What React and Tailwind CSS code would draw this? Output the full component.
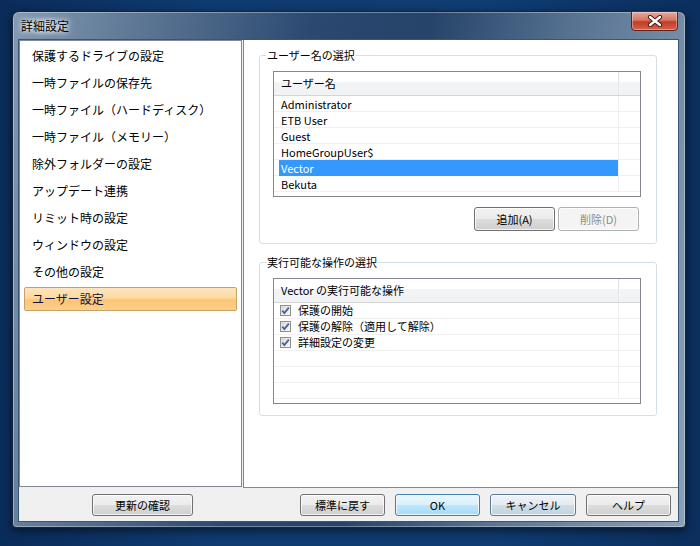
import React from 'react';

const navItems = [
  '保護するドライブの設定',
  '一時ファイルの保存先',
  '一時ファイル（ハードディスク）',
  '一時ファイル（メモリー）',
  '除外フォルダーの設定',
  'アップデート連携',
  'リミット時の設定',
  'ウィンドウの設定',
  'その他の設定',
  'ユーザー設定',
];

const users = ['Administrator', 'ETB User', 'Guest', 'HomeGroupUser$', 'Vector', 'Bekuta'];
const actions = ['保護の開始', '保護の解除（適用して解除）', '詳細設定の変更', '', '', ''];

const Btn = ({ children, kind = 'normal', w }) => {
  const styles = {
    normal:
      'border-[#707070] text-black bg-[linear-gradient(to_bottom,#f2f2f2_0%,#ebebeb_50%,#dddddd_50%,#cfcfcf_100%)]',
    primary:
      'border-[#3c7fb1] text-black bg-[linear-gradient(to_bottom,#eaf6fd_0%,#d9f0fc_50%,#bee6fd_50%,#a7d9f5_100%)]',
    hover:
      'border-[#5b7a94] text-black bg-[linear-gradient(to_bottom,#eef3f7_0%,#e3ebf1_50%,#cfdde7_50%,#c2d4e0_100%)]',
    disabled: 'border-[#adb2b5] text-[#8a8a8a] bg-[#f4f4f4]',
  };
  return (
    <button
      className={`${w} h-full rounded-[3px] border text-[11px] leading-none shadow-[inset_0_0_0_1px_rgba(255,255,255,0.75)] ${styles[kind]}`}
    >
      {children}
    </button>
  );
};

const Check = () => (
  <span className="flex h-[11px] w-[11px] items-center justify-center border border-[#8e8f8f] bg-[linear-gradient(135deg,#d8d8d8,#fafafa)]">
    <svg width="9" height="9" viewBox="0 0 9 9">
      <path d="M1.3 4.6 L3.4 7 L7.8 1.6" fill="none" stroke="#4a5fa0" strokeWidth="1.8" />
    </svg>
  </span>
);

const ListHeader = ({ title }) => (
  <div className="flex h-[24px] border-b border-[#d5d5d5] bg-[linear-gradient(to_bottom,#ffffff_0%,#ffffff_45%,#f3f4f6_45%,#f1f2f4_100%)]">
    <div className="flex w-[344px] items-center pl-[7px] text-[11px] text-black">{title}</div>
    <div className="w-[2px] border-l border-[#e3e5e8] bg-[#f7f7f7]" />
    <div className="flex-1" />
  </div>
);

const GroupBox = ({ legend, className, children }) => (
  <div className={`relative ml-[15px] w-[398px] rounded-[3px] border border-[#d5dfe5] pl-[13px] pt-[15px] ${className}`}>
    <span className="absolute left-[6px] top-[-8px] bg-white px-[1px] text-[11px] leading-[14px] text-black">
      {legend}
    </span>
    {children}
  </div>
);

export default function App() {
  return (
    <div className="h-[546px] w-[700px] overflow-hidden bg-[linear-gradient(to_right,#0a2c5a,#0f3b70_30%,#0f3c72_70%,#0b2f5e)] pl-[12px] pt-[11px] font-['Noto_Sans_CJK_JP',sans-serif]">
      <div className="relative flex h-[517px] w-[674px] flex-col rounded-b-[4px] rounded-t-[7px] border border-[#15253a] bg-[linear-gradient(100deg,#8299b1_0%,#5a7492_18%,#2a4870_40%,#264469_55%,#5a7594_75%,#8ba1b8_100%)] shadow-[0_3px_10px_rgba(0,0,0,0.55),inset_0_0_0_1px_rgba(255,255,255,0.35)]">
        {/* title bar */}
        <div className="flex h-[28px] items-center pl-[7px]">
          <span className="rounded-[6px] bg-[radial-gradient(ellipse_at_center,rgba(255,255,255,0.45),rgba(255,255,255,0)_75%)] px-[1px] text-[12px] text-black [text-shadow:0_0_5px_rgba(255,255,255,1),0_0_9px_rgba(255,255,255,0.85)]">
            詳細設定
          </span>
        </div>
        <div className="absolute right-[7px] top-[-1px] flex h-[20px] w-[47px] items-center justify-center rounded-b-[4px] border border-[#5a231d] bg-[linear-gradient(to_bottom,#e7a99e_0%,#d47764_45%,#c23b25_55%,#d5644b_100%)] shadow-[inset_0_0_0_1px_rgba(255,255,255,0.35)]">
          <svg width="16" height="12" viewBox="0 0 16 12">
            <path d="M3 2 L13 10 M13 2 L3 10" stroke="#3b1510" strokeWidth="4.2" strokeLinecap="round" />
            <path d="M3 2 L13 10 M13 2 L3 10" stroke="#ffffff" strokeWidth="2.4" strokeLinecap="round" />
          </svg>
        </div>

        {/* client */}
        <div className="mb-[6px] ml-[6px] mr-[7px] flex flex-1 flex-col bg-[#f0f0f0] shadow-[0_0_0_1px_#3a5677]">
          <div className="flex h-[448px]">
            {/* left nav */}
            <div className="flex h-[447px] w-[223px] flex-col gap-[3px] border border-[#828790] bg-white px-[4px] pt-[3px]">
              {navItems.map((t, i) => {
                const sel = i === navItems.length - 1;
                return (
                  <div
                    key={t}
                    className={
                      sel
                        ? 'flex h-[24px] items-center rounded-[2px] border border-[#c8a068] bg-[linear-gradient(to_bottom,#fde5bf_0%,#fdd9a0_45%,#fbc574_55%,#fcd08c_100%)] pl-[7px] text-[12px] text-[#101040]'
                        : 'flex h-[24px] items-center border border-transparent pl-[7px] text-[12px] text-black'
                    }
                  >
                    {t}
                  </div>
                );
              })}
            </div>
            <div className="w-[1px]" />
            {/* right content */}
            <div className="flex-1 border-b border-l border-[#828790] bg-white pt-[15px]">
              <GroupBox legend="ユーザー名の選択" className="h-[189px]">
                <div className="h-[126px] w-[368px] border border-[#828790] bg-white">
                  <ListHeader title="ユーザー名" />
                  {users.map((u) => {
                    const sel = u === 'Vector';
                    return (
                      <div key={u} className="flex h-[16px] border-b border-[#f0f0f0]">
                        <div className="w-[344px] pl-[5px]">
                          <div
                            className={
                              sel
                                ? 'h-[16px] bg-[#3399ff] pl-[2px] text-[11px] leading-[16px] text-white'
                                : 'h-[16px] pl-[2px] text-[11px] leading-[16px] text-black'
                            }
                          >
                            {u}
                          </div>
                        </div>
                        <div className="flex-1 border-l border-[#f0f0f0]" />
                      </div>
                    );
                  })}
                </div>
                <div className="mt-[10px] flex h-[24px] w-[368px] justify-end gap-[3px] pr-[2px]">
                  <Btn w="w-[81px]">追加(A)</Btn>
                  <Btn w="w-[81px]" kind="disabled">
                    削除(D)
                  </Btn>
                </div>
              </GroupBox>

              <GroupBox legend="実行可能な操作の選択" className="mt-[18px] h-[154px]">
                <div className="h-[126px] w-[368px] border border-[#828790] bg-white">
                  <ListHeader title="Vector の実行可能な操作" />
                  {actions.map((a, i) => (
                    <div key={i} className="flex h-[16px] border-b border-[#f0f0f0]">
                      <div className="flex w-[344px] items-center gap-[7px] pl-[6px] text-[11px] text-black">
                        {a && <Check />}
                        {a}
                      </div>
                      <div className="flex-1 border-l border-[#f0f0f0]" />
                    </div>
                  ))}
                </div>
              </GroupBox>
            </div>
          </div>

          {/* bottom bar */}
          <div className="mt-[6px] flex h-[22px]">
            <div className="ml-[73px] flex">
              <Btn w="w-[101px]">更新の確認</Btn>
            </div>
            <div className="ml-[107px] flex gap-[10px]">
              <Btn w="w-[85px]">標準に戻す</Btn>
              <Btn w="w-[85px]" kind="primary">
                OK
              </Btn>
              <Btn w="w-[86px]" kind="hover">
                キャンセル
              </Btn>
              <Btn w="w-[85px]">ヘルプ</Btn>
            </div>
          </div>
        </div>
      </div>
    </div>
  );
}
